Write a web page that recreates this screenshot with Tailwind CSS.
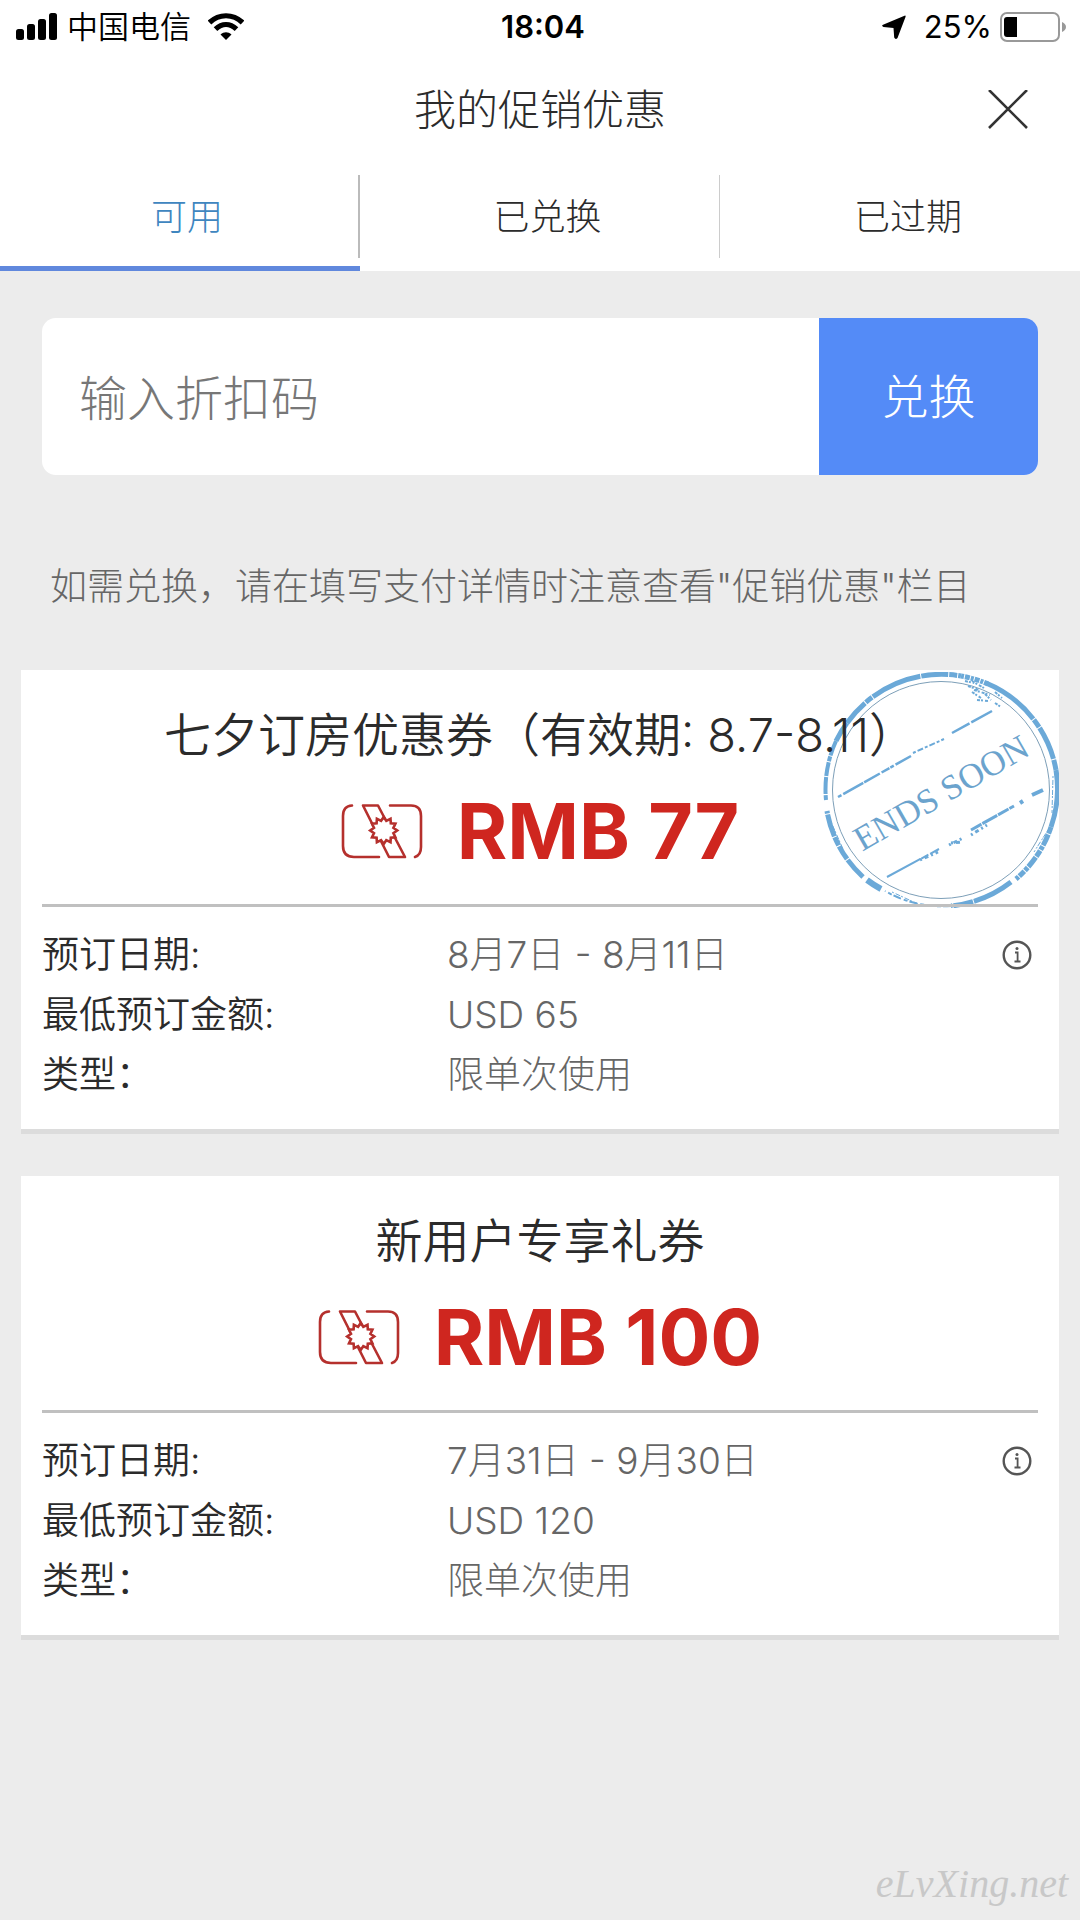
<!DOCTYPE html>
<html lang="zh-CN">
<head>
  <meta charset="UTF-8">
  <meta name="viewport" content="width=device-width, initial-scale=1.0">
  <title>我的促销优惠</title>
  <script src="https://cdn.jsdelivr.net/npm/@tailwindcss/browser@4"></script>
</head>
<body class="min-h-screen flex flex-col bg-[#ececec] text-[#2b2b2b] font-light font-['Inter','Noto_Sans_CJK_SC',sans-serif]">
  <!-- shared icons -->
  <svg class="hidden">
    <symbol id="coupon" viewBox="0 0 82 55">
      <g fill="none" stroke="#b5302d" stroke-width="2.6" stroke-linecap="round" stroke-linejoin="round">
        <path d="M11 1.5Q2 2 2 12V42Q2 53 13 53H38"/>
        <path d="M49 1.5H70Q80 1.5 80 12V43Q80 51 74 53"/>
        <path d="M22 1.5H37L64 53H48Z"/>
        <path fill="#fff" stroke-linejoin="miter" transform="translate(42.7 26.5)" d="M13.5 0L9.7 2.6L11.7 6.8L7.1 7.1L6.8 11.7L2.6 9.7L0 13.5L-2.6 9.7L-6.8 11.7L-7.1 7.1L-11.7 6.8L-9.7 2.6L-13.5 0L-9.7 -2.6L-11.7 -6.8L-7.1 -7.1L-6.8 -11.7L-2.6 -9.7L0 -13.5L2.6 -9.7L6.8 -11.7L7.1 -7.1L11.7 -6.8L9.7 -2.6Z"/>
      </g>
    </symbol>
    <symbol id="info" viewBox="0 0 30 30">
      <circle cx="15" cy="15" r="13.3" fill="none" stroke="#555" stroke-width="2.4"/>
      <path d="M13 12.5H15.6V21.5M12.5 21.5H18.5" fill="none" stroke="#555" stroke-width="1.8"/>
      <circle cx="15" cy="8.5" r="1.5" fill="#555"/>
    </symbol>
  </svg>

  <header class="bg-white">
    <div class="grid grid-cols-3 items-center h-[54px] pl-4 pr-[14px] text-black">
      <div class="flex items-center text-[31px] leading-10 font-[350]">
        <svg class="w-[42px] h-7 mr-[9px]" viewBox="0 0 42 28">
          <rect x="0" y="16" width="8" height="11" rx="2.5"/>
          <rect x="11" y="11" width="8" height="16" rx="2.5"/>
          <rect x="22" y="6" width="8" height="21" rx="2.5"/>
          <rect x="33" y="0" width="8" height="27" rx="2.5"/>
        </svg>
        中国电信
        <svg class="w-9 h-7 ml-[17px]" viewBox="0 0 36 28" fill="none" stroke="#000" stroke-width="5.2">
          <path d="M1.5 9.5C11 .5 25 .5 34.5 9.5"/>
          <path d="M7.5 16.2C14 10 22 10 28.5 16.2"/>
          <path d="M18 27L12.5 21.5C16 18.5 20 18.5 23.5 21.5Z" fill="#000" stroke="none"/>
        </svg>
      </div>
      <div class="pl-1 text-center text-[31px] leading-10 font-semibold">18:04</div>
      <div class="flex items-center justify-end text-[31px] leading-10 font-normal">
        <svg class="w-6 h-6 mr-[18px]" viewBox="0 0 24 24"><path d="M22.5 .8Q24 0 23.5 2L15.5 23Q13.5 25 12.2 22.5L11.5 13L1.5 12Q-1 11 1 9.8Z"/></svg>
        25%
        <svg class="w-[66px] h-[31px] ml-2" viewBox="0 0 66 31">
          <rect x="1" y="1" width="58" height="28" rx="6" fill="none" stroke="#999" stroke-width="2"/>
          <path d="M62 10Q66 12 66 15T62 20Z" fill="#999"/>
          <rect x="4" y="5" width="13" height="20" rx="3"/><rect x="10" y="5" width="7" height="20"/>
        </svg>
      </div>
    </div>

    <div class="grid grid-cols-[1fr_auto_1fr] items-center h-28 px-[52px]">
      <h1 class="col-start-2 text-[42px] leading-[60px]">我的促销优惠</h1>
      <button type="button" aria-label="关闭" class="justify-self-end">
        <svg class="w-10 h-10" viewBox="0 0 40 40" fill="none" stroke="#333" stroke-width="2.6"><path d="M1 0L39 38M39 0L1 38"/></svg>
      </button>
    </div>

    <nav class="grid grid-cols-3 text-[36px]">
      <button type="button" class="pt-[9px] pb-2 border-b-[5px] border-[#6088dd] text-[#3f86bf]">
        <span class="block pt-[2px] pl-4 leading-[81px] border-r-2 border-[#bbb]">可用</span>
      </button>
      <button type="button" class="pt-[9px] pb-2 border-b-[5px] border-transparent">
        <span class="block pt-[2px] pl-4 leading-[81px] border-r border-[#ccc]">已兑换</span>
      </button>
      <button type="button" class="pt-[9px] pb-2 border-b-[5px] border-transparent">
        <span class="block pt-[2px] pl-4 leading-[81px]">已过期</span>
      </button>
    </nav>
  </header>

  <main class="px-[21px] pt-[47px]">
    <form class="flex h-[157px] mx-[21px] rounded-[14px] overflow-hidden bg-white">
      <input type="text" aria-label="折扣码" placeholder="输入折扣码" class="flex-1 min-w-0 px-[37px] pt-1 text-[48px] outline-none placeholder:text-[#777]">
      <button type="button" class="w-[219px] pt-[2px] bg-[#548bf7] text-white text-[47px]">兑换</button>
    </form>

    <p class="mt-[84px] mb-[55px] ml-[29px] text-[37px] leading-14 text-[#666] whitespace-nowrap">如需兑换，请在填写支付详情时注意查看"促销优惠"栏目</p>

    <section class="relative mb-[42px] px-[21px] pt-[35px] pb-6 bg-white border-b-[5px] border-[#dcdcdc]">
      <svg class="absolute top-[2px] right-0 w-[236px] h-[236px]" viewBox="0 0 236 236" fill="none" stroke="#6ba9d8">
        <circle cx="118" cy="118" r="108.5" stroke="#7d9fb8" stroke-width="1"/>
        <!-- worn outer ring -->
        <g stroke-width="5">
          <path d="M24 51A116 116 0 0 1 138 4" stroke-dasharray="27 1 8 1 52 1"/>
          <path d="M138 4A116 116 0 0 1 165 12" stroke-dasharray="3 1 5 1"/>
          <path d="M163 11A116 116 0 0 1 233 98" stroke-dasharray="60 1 9 1 34 1"/>
          <path d="M233 98A116 116 0 0 1 228 155"/>
          <path d="M228 155A116 116 0 0 1 193 207" stroke-dasharray="7 1 12 1 4 1"/>
          <path d="M188 210A116 116 0 0 1 128 234" stroke-dasharray="42 1 20 1"/>
          <path d="M128 234A116 116 0 0 1 62 219" stroke-width="2" stroke-dasharray="8 2 4 3"/>
          <path d="M58 217A116 116 0 0 1 44 208" stroke-width="6"/>
          <path d="M40 205A116 116 0 0 1 4 139" stroke-dasharray="23 1 15 1 9 1"/>
          <path d="M3 128A116 116 0 0 1 13 69" stroke-width="4" stroke-dasharray="5 1 17 1 14 1"/>
          <path d="M13 69A116 116 0 0 1 24 51"/>
        </g>
        <path d="M8 150L20 177M230 104L229 141M225 158L211 180M69 220L95 232" stroke-dasharray="2 2 5 1"/>
        <path d="M142 9l9 2m-6 3l11 4m-7-9l12 7m-10 2l16 5m-18-3l9 6m-4 2l12 1m-4-7l6 6m4-8l7 6m-7 5l6 4" stroke-width="2" stroke-dasharray="3 1 2 2"/>
        <!-- ruled lines -->
        <path d="M15 125L88 84" stroke-width="2.5" stroke-dasharray="4 2 23 1 18 2 9 1"/>
        <path d="M90 81L121 67" stroke-width="2" stroke-dasharray="3 2 6 2"/>
        <path d="M129 61L169 39" stroke-width="2.5" stroke-dasharray="20 2 24"/>
        <path d="M64 205L116 177" stroke-width="2" stroke-dasharray="38 1 8 2"/>
        <path d="M97 188l18-8m11-7l14-7m-12 5l11-1m9-7l16-10" stroke-width="3" stroke-dasharray="2 3 4 3"/>
        <path d="M148 158L191 134" stroke-width="3" stroke-dasharray="12 1 17 1"/>
        <path d="M197 131l3-2M209 123L220 118" stroke-width="4"/>
        <text x="124" y="131" text-anchor="middle" transform="rotate(-30 124 131)" font-size="35" font-weight="400" fill="#6ba3cd" stroke="none" class="font-['Liberation_Serif',serif]">ENDS SOON</text>
      </svg>
      <h2 class="relative text-center text-[47px] leading-[60px] font-[350] whitespace-nowrap">七夕订房优惠券（有效期: 8.7-8.11）</h2>
      <div class="flex items-center justify-center gap-[34px] mt-[26px] text-[77px] leading-[80px] font-bold text-[#cf261f]">
        <svg class="w-[82px] h-[55px]"><use href="#coupon"/></svg>
        RMB 77
      </div>
      <div class="relative mt-[33px] pt-[18px] border-t-[3px] border-[#c0c0c0]">
        <dl class="grid grid-cols-[405px_1fr] text-[37px] leading-[60px]">
          <dt class="font-[350]">预订日期:</dt>
          <dd class="flex items-center justify-between pr-[6px] text-[#666]">8月7日 - 8月11日 <button type="button" aria-label="详情"><svg class="w-[30px] h-[30px]"><use href="#info"/></svg></button></dd>
          <dt class="font-[350]">最低预订金额:</dt>
          <dd class="text-[#666]">USD 65</dd>
          <dt class="font-[350]">类型：</dt>
          <dd class="text-[#666]">限单次使用</dd>
        </dl>
      </div>
    </section>

    <section class="px-[21px] pt-[35px] pb-6 bg-white border-b-[5px] border-[#dcdcdc]">
      <h2 class="text-center text-[47px] leading-[60px] font-[350]">新用户专享礼券</h2>
      <div class="flex items-center justify-center gap-[34px] mt-[26px] text-[77px] leading-[80px] font-bold text-[#cf261f]">
        <svg class="w-[82px] h-[55px]"><use href="#coupon"/></svg>
        RMB 100
      </div>
      <div class="mt-[33px] pt-[18px] border-t-[3px] border-[#c0c0c0]">
        <dl class="grid grid-cols-[405px_1fr] text-[37px] leading-[60px]">
          <dt class="font-[350]">预订日期:</dt>
          <dd class="flex items-center justify-between pr-[6px] text-[#666]">7月31日 - 9月30日 <button type="button" aria-label="详情"><svg class="w-[30px] h-[30px]"><use href="#info"/></svg></button></dd>
          <dt class="font-[350]">最低预订金额:</dt>
          <dd class="text-[#666]">USD 120</dd>
          <dt class="font-[350]">类型：</dt>
          <dd class="text-[#666]">限单次使用</dd>
        </dl>
      </div>
    </section>
  </main>

  <footer class="mt-auto pr-3 pb-2 text-right text-[40px] leading-[56px] italic font-normal text-[#c8c8c8] font-['Liberation_Serif',serif]">eLvXing.net</footer>
</body>
</html>
